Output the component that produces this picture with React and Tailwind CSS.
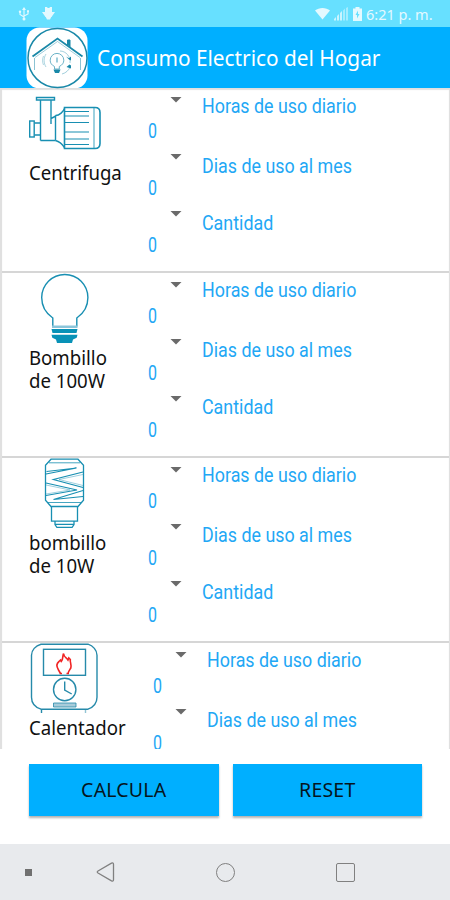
import React from "react";

const LogoIcon = () => (
  <svg width="62" height="62" viewBox="0 0 62 62" fill="none" stroke="#1988a8">
    <rect x="0.5" y="0.5" width="61" height="61" rx="13" fill="#fff" stroke="none" />
    <circle cx="31.5" cy="31" r="29.5" strokeWidth="1.5" />
    <path d="M6.5 29.5 31.500 11.500l25 18" strokeWidth="1.8" />
    <path d="M9 30.5 31.500 14.500 54 30.500" strokeWidth="0.7" opacity="0.6" />
    <path d="M41.500 18v-5h2.500v7" fill="#1988a8" />
    <path d="M8.500 31v12M54.500 31v12" strokeWidth="1" opacity="0.5" />
    <g opacity="0.7">
      <path d="M28.500 42v-2.500c-3-1.500-4.300-3.500-4.300-6.300a6.800 6.800 0 0 1 13.600 0c0 2.800-1.500 4.800-4.500 6.300V42z" strokeWidth="0.9" />
      <path d="M31 30.500v5" strokeWidth="1.2" />
    </g>
    <path d="M27.500 42.500h7l-1.500 3.500h-4z" fill="#1988a8" stroke="none" />
    <path d="M20 27c-2.500 4-2.500 9 0 13M17.500 29c-1.200 3-1.200 6 0 9" strokeWidth="0.8" opacity="0.45" />
    <path d="M34 24c6 0 11 6 10 12M36 47c4-1 7-4 8-7" strokeWidth="0.9" opacity="0.45" />
    <path d="M40 29.500l3 1.800 2-1.800v4l-2-1zM40.500 40l3-2.500 1.500 1v3z" fill="#1988a8" stroke="none" />
  </svg>
);

const PumpIcon = () => (
  <svg width="75" height="70" viewBox="0 0 75 70" fill="none" stroke="#188fb2" strokeWidth="1.4">
    <path d="M7.500 9.500H25.500v2.500H7.500zM11.500 12v40.500M22 12v24M11.500 52.500H26.500M22 30.500l5-2.500" />
    <rect x="0.700" y="33" width="4.500" height="16" />
    <path d="M5.500 35h6M5.500 47h6M26.500 27.500v25M26.500 27.500c4 0 8-4 9-7M26.500 52.500c4 1 7 4 9 7" />
    <path d="M35.500 19.500H66c3.500 0 5 2 5 5v31c0 3-1.500 5-5 5H35.500z" strokeWidth="1.600" />
    <path d="M65 20v40" opacity="0.6" />
    <path d="M36 23.500h24M36 28h24M36 34.500h24M36 44h24M36 51h24M36 56.500h24" strokeWidth="1.200" />
  </svg>
);

const BulbIcon = () => (
  <svg width="75" height="70" viewBox="0 0 75 70" fill="none" stroke="#188fb2" strokeWidth="1.4">
    <path d="M23.800 53.500v-8.500C17 40.500 12.700 34 12.700 24.600a23.100 23.100 0 0 1 46.200 0c0 9.400-4.300 15.900-11.100 20.400v8.500" />
    <path d="M23 52.500h25.500v2.500H23z" fill="#8bc5da" stroke="none" />
    <path d="M22.500 56h26l-1 4H23.500z" fill="#0892b7" stroke="none" />
    <path d="M22.500 61.800h26l-.8 3-3.700 1.700-1 3.500H28l-1-3.500-3.700-1.700z" fill="#0892b7" stroke="none" />
  </svg>
);

const SaverBulbIcon = () => (
  <svg width="75" height="70" viewBox="0 0 75 70" fill="none" stroke="#188fb2" strokeWidth="1.3">
    <path d="M22 1.200h27l5.500 6v35l-5.500 6.300H22l-5.500-6.300v-35z" />
    <path d="M20 4.800h31M19 44.500h33" strokeWidth="1" opacity="0.8" />
    <path d="M17 16 47.500 10M47.500 10l-30 3.500M54 14 24.500 21.500 54 29.500M17 25l31 7-31 5.500M54 32.500 24.500 41.500l29.500-3" strokeWidth="1.2" />
    <path d="M54 16.500 30 21.500l24 6M17 27l24 5-24 4" strokeWidth="0.7" opacity="0.6" />
    <path d="M22.500 48.500v14.700h26V48.500M26 63.200v3.300l2 3h15l2-3v-3.300M26 66.300h19" />
  </svg>
);

const HeaterIcon = () => (
  <svg width="75" height="70" viewBox="0 0 75 70" fill="none" stroke="#268aaa" strokeWidth="1.400">
    <path d="M12 1.200h47c5 1.500 9 6 9 11v42c0 6-4 10-9 12H12c-6-2-9.500-6-9.500-12v-42c0-5 4-9.500 9.500-11z" />
    <rect x="14.500" y="6.300" width="42" height="26" />
    <circle cx="35.700" cy="46.500" r="11.200" />
    <path d="M35.700 38.500v8.500l7 4M12.500 66v4" />
    <path d="M56.500 66v4" opacity="0.5" />
    <path d="M24.500 60h22.500v4H24.500z" fill="#a8ccda" strokeWidth="0.8" />
    <path
      d="M31.500 30.500 29.500 27c-2.500-4-1.500-7 .5-8.500l1.500-1.500.8 1.500c2-2 1-5 2.200-8 .5 4 3 4 4.500 6.500l.8-2 1.500 1.500c-.5 3 1.500 5 .5 8.500-.8 1.500-2.300 3-2.800 5.500M30.500 30.500h2.500M37.500 30.500h2.500"
      stroke="#f12424"
      strokeWidth="1.600"
    />
  </svg>
);

const appliances = [
  { name: ["Centrifuga"], icon: PumpIcon, column: "w-[119px]", fields: ["Horas de uso diario", "Dias de uso al mes", "Cantidad"] },
  { name: ["Bombillo", "de 100W"], icon: BulbIcon, column: "w-[119px]", fields: ["Horas de uso diario", "Dias de uso al mes", "Cantidad"] },
  { name: ["bombillo", "de 10W"], icon: SaverBulbIcon, column: "w-[119px]", fields: ["Horas de uso diario", "Dias de uso al mes", "Cantidad"] },
  { name: ["Calentador"], icon: HeaterIcon, column: "w-[123.5px]", fields: ["Horas de uso diario", "Dias de uso al mes"] },
];

const Spinner = () => (
  <div className="h-[57px] w-[54px] pt-[9px]">
    <svg className="ml-[22px] block" width="12" height="6" viewBox="0 0 12 6">
      <path d="M0.500 0h11L6 5.500z" fill="#6a6a6a" />
    </svg>
    <div className="mt-[16px] h-[24px] text-[20px] leading-[24px]">
      <span className="inline-block origin-left scale-x-[0.8]">0</span>
    </div>
  </div>
);

const ApplianceRow = ({ item }) => (
  <li className="flex h-[184.9px] shrink-0 border-b-2 border-[#d6d6d6] pl-[27px]">
    <div className={`shrink-0 ${item.column}`}>
      <div className="h-[70px]">
        <item.icon />
      </div>
      <p className="mt-[3px] origin-left scale-x-[0.955] font-['Noto_Sans',sans-serif] text-[19.5px] leading-[23.5px] text-[#111]">
        {item.name.map((line) => (
          <span key={line} className="block">
            {line}
          </span>
        ))}
      </p>
    </div>
    <div className="shrink-0 font-[Roboto,sans-serif] text-[#22a7f5]">
      {item.fields.map((field) => (
        <Spinner key={field} />
      ))}
    </div>
    <div className="flex flex-col whitespace-nowrap pt-[5.5px] font-[Roboto,sans-serif] text-[20px] leading-[24px] text-[#22a7f5]">
      {item.fields.map((field, index) => (
        <span
          key={field}
          className={`origin-left scale-x-[0.893] ${index === 0 ? "h-[60px]" : "h-[57px]"}`}
        >
          {field}
        </span>
      ))}
    </div>
  </li>
);

const StatusBar = () => (
  <div className="flex h-[27px] shrink-0 items-center bg-[#67e0ff] pl-[18px] pr-[17px] text-[#e4f9ff]">
    <svg width="12" height="14" viewBox="0 0 12 14" fill="none" stroke="currentColor" strokeWidth="1.1">
      <path d="M6 1v11M6 10 2 7.500V5M6 9l4-2V4.500" />
      <path d="M6 0l2 3H4z" fill="currentColor" stroke="none" />
      <circle cx="6" cy="12" r="1.500" fill="currentColor" stroke="none" />
      <circle cx="2" cy="4.700" r="1.200" fill="currentColor" stroke="none" />
      <path d="M9 3.200h2v2H9z" fill="currentColor" stroke="none" />
    </svg>
    <svg className="ml-[12px]" width="13" height="13" viewBox="0 0 13 13" fill="currentColor">
      <path d="M3 0h2l.7 1h1.600L8 0h2v5h3L9.500 10h-6L0 5h3z" />
      <path d="M3.500 9.500h6l-1.500 3H5z" />
    </svg>
    <svg className="ml-auto" width="15" height="13" viewBox="0 0 15 13" fill="currentColor">
      <path d="M0 3.500C4 0 11 0 15 3.500L7.500 12.500z" />
    </svg>
    <svg className="ml-[4px]" width="14" height="14" viewBox="0 0 14 14" fill="currentColor">
      <path d="M0 13.500V12l2-2v3.500zM3 13.500V9l2-2v6.500zM6 13.500V6l2-2v9.500z" opacity="0.8" />
      <path d="M9 13.500V3.500l2-2v12zM12 13.500V1l2-1v13.500z" opacity="0.5" />
    </svg>
    <svg className="ml-[5px]" width="9" height="14" viewBox="0 0 9 14">
      <path d="M2.500 0h4v1.500H9V14H0V1.500h2.500z" fill="currentColor" />
      <path d="M5 3.500 2.500 8H4v3.500L6.500 7H5z" fill="#67e0ff" />
    </svg>
    <span className="ml-[4px] w-[67px] whitespace-nowrap font-['Noto_Sans',sans-serif] text-[14.5px] leading-[20px]">
      6:21 p. m.
    </span>
  </div>
);

const NavBar = () => (
  <nav className="flex h-[56px] shrink-0 items-center bg-[#e8eaed] pl-[25px]">
    <div className="h-[7px] w-[7px] bg-[#707070]" />
    <svg className="ml-[64px]" width="20" height="20" viewBox="0 0 20 20" fill="none" stroke="#808080" strokeWidth="1.3">
      <path d="M2 9 15.500 1.200q2-.8 2 1v15.600q0 1.800-2 1L2 11q-1.500-1 0-2z" />
    </svg>
    <div className="ml-[100px] h-[19px] w-[19px] rounded-full border-[1.5px] border-[#808080]" />
    <div className="ml-[101px] h-[19px] w-[19px] rounded-[2px] border-[1.5px] border-[#808080]" />
  </nav>
);

const App = () => (
  <div className="flex h-[900px] w-[450px] flex-col overflow-hidden bg-white">
    <StatusBar />

    {/* Toolbar */}
    <header className="flex h-[61px] shrink-0 items-center bg-[#00afff] pl-[26px]">
      <LogoIcon />
      <h1 className="ml-[9px] origin-left scale-x-[0.968] whitespace-nowrap font-['Noto_Sans',sans-serif] text-[21.5px] leading-[28px] text-white">
        Consumo Electrico del Hogar
      </h1>
    </header>

    {/* Appliance list */}
    <ul className="h-[661px] shrink-0 overflow-hidden border-l-2 border-r border-[#e0e0e0] shadow-[inset_0_2px_1px_rgba(0,0,0,0.12)]">
      {appliances.map((item) => (
        <ApplianceRow key={item.name[0]} item={item} />
      ))}
    </ul>

    {/* Actions */}
    <div className="flex h-[95px] shrink-0 gap-[14px] pl-[29px] pt-[14.5px] font-['Noto_Sans',sans-serif] text-[19.5px] tracking-[0.2px] text-[#06151d]">
      <button className="h-[52px] w-[189.5px] bg-[#00afff] pt-[1px] shadow-[0_2px_2px_rgba(0,0,0,0.3)]">
        CALCULA
      </button>
      <button className="h-[52px] w-[189.5px] bg-[#00afff] pt-[1px] shadow-[0_2px_2px_rgba(0,0,0,0.3)]">
        RESET
      </button>
    </div>

    <NavBar />
  </div>
);

export default App;
